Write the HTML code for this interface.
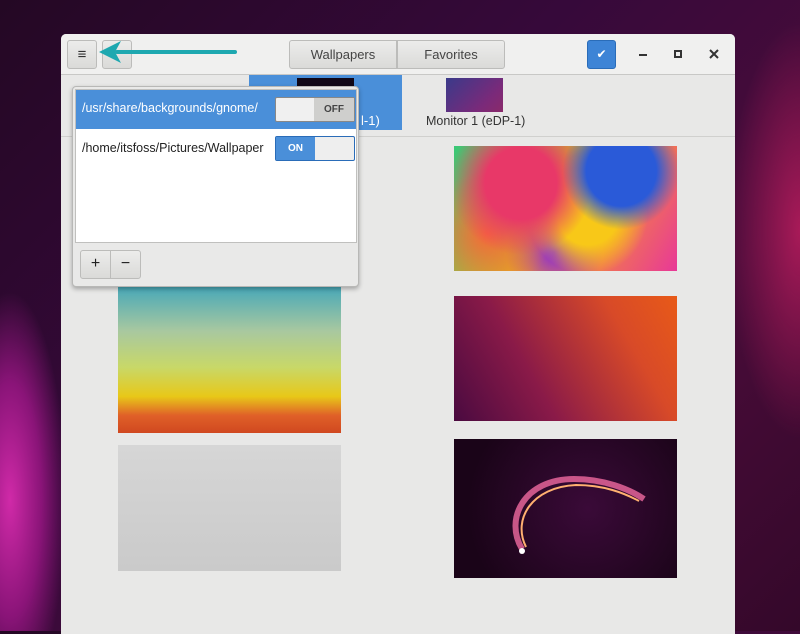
<!DOCTYPE html>
<html><head><meta charset="utf-8"><style>
*{box-sizing:border-box;margin:0;padding:0}
body{width:800px;height:631px;overflow:hidden;position:relative;font-family:"Liberation Sans",sans-serif;
background:radial-gradient(ellipse 70px 260px at 10px 500px,#d02aa8 0%,#8a1478 45%,transparent 80%),
radial-gradient(ellipse 90px 260px at 800px 230px,#a81a58 0%,transparent 80%),
linear-gradient(135deg,#240824 0%,#36093a 40%,#4a0c3a 70%,#34082a 100%);}
.a{position:absolute}
.win{left:61px;top:34px;width:674px;height:600px;background:#e8e8e7;border-radius:5px 5px 0 0}
.hdr{left:0;top:0;width:674px;height:41px;background:#f0f0ef;border-bottom:1px solid #c8c8c6;border-radius:5px 5px 0 0}
.btn{background:linear-gradient(#ececeb,#dadad8);border:1px solid #bcbcba;border-radius:3px}
.img{position:absolute}
</style></head><body>
<div class="a win">
 <div class="a hdr"></div>
 <div class="a btn" style="left:6px;top:6px;width:30px;height:29px;font-size:15px;text-align:center;line-height:27px;color:#333">≡</div>
 <div class="a btn" style="left:41px;top:6px;width:30px;height:29px"></div>
 <div class="a btn" style="left:228px;top:6px;width:108px;height:29px;font-size:13px;text-align:center;line-height:27px;color:#444;border-radius:3px 0 0 3px">Wallpapers</div>
 <div class="a btn" style="left:336px;top:6px;width:108px;height:29px;font-size:13px;text-align:center;line-height:27px;color:#444;border-radius:0 3px 3px 0">Favorites</div>
 <div class="a" style="left:526px;top:6px;width:29px;height:29px;background:#3d84d6;border:1px solid #2a6cb8;border-radius:3px;color:#fff;text-align:center;line-height:27px;font-size:12px">✔</div>
 <div class="a" style="left:578px;top:20px;width:8px;height:2px;background:#333"></div>
 <div class="a" style="left:613px;top:16px;width:8px;height:8px;border:2px solid #333"></div>
 <svg class="a" style="left:648px;top:15px" width="10" height="10"><path d="M1 1L9 9M9 1L1 9" stroke="#333" stroke-width="2"/></svg>
 <div class="a" style="left:0;top:102px;width:674px;height:1px;background:#d0d0ce"></div>
 <div class="a" style="left:188px;top:41px;width:153px;height:55px;background:#4a8fd9"></div>
 <div class="a" style="left:236px;top:44px;width:57px;height:22px;background:#100818"></div>
 <div class="a" style="left:300px;top:79px;color:#fff;font-size:13px">l-1)</div>
 <div class="a" style="left:385px;top:44px;width:57px;height:34px;background:linear-gradient(135deg,#3a3a8a,#7a2a7a 70%,#8a2a6a)"></div>
 <div class="a" style="left:365px;top:80px;color:#333;font-size:12.5px">Monitor 1 (eDP-1)</div>
</div>
<div class="img" style="left:454px;top:146px;width:223px;height:125px;background:radial-gradient(circle at 75% 20%,#2a5ad8 0 18%,transparent 30%),radial-gradient(circle at 30% 30%,#e83868 0 20%,transparent 40%),radial-gradient(circle at 60% 55%,#f8c818 0 20%,transparent 40%),radial-gradient(circle at 15% 70%,#f86838,transparent 30%),radial-gradient(circle at 45% 85%,#8a28d8,transparent 30%),linear-gradient(120deg,#38c878,#f8a818,#e83898)"></div>
<div class="img" style="left:118px;top:287px;width:223px;height:146px;background:linear-gradient(180deg,#48a8b8 0%,#a8c8a0 30%,#c8d868 55%,#e8c818 75%,#e06028 88%,#d04820 100%)"></div>
<div class="img" style="left:454px;top:296px;width:223px;height:125px;background:linear-gradient(60deg,#4a0a40 0%,#8a1a48 35%,#d84a28 75%,#e85a18 100%)"></div>
<div class="img" style="left:118px;top:445px;width:223px;height:126px;background:linear-gradient(#d6d6d6,#cacaca)"></div>
<div class="img" style="left:454px;top:439px;width:223px;height:139px;background:radial-gradient(circle at 60% 50%,#3a0a38,#1a0418 80%)">
 <svg width="223" height="139"><path d="M68 110C50 80 70 40 120 40C150 40 175 50 190 60" stroke="#f06aa0" stroke-width="6" fill="none" opacity=".8"/><path d="M72 108C58 80 78 48 122 46C150 46 170 54 185 62" stroke="#ffb070" stroke-width="2" fill="none"/><circle cx="68" cy="112" r="3" fill="#fff"/></svg>
</div>
<div class="a" style="left:72px;top:86px;width:287px;height:201px;background:#e9e9e8;border:1px solid #b8b8b6;border-radius:4px;box-shadow:0 2px 5px rgba(0,0,0,.3)">
 <div class="a" style="left:2px;top:2px;width:282px;height:154px;background:#fff;border:1px solid #c0c0be"></div>
 <div class="a" style="left:3px;top:3px;width:280px;height:39px;background:#4a8fd9"></div>
 <div class="a" style="left:9px;top:14px;color:#fff;font-size:12.5px">/usr/share/backgrounds/gnome/</div>
 <div class="a" style="left:202px;top:10px;width:80px;height:25px;border:1px solid #888;border-radius:2px;background:#f0f0f0"><div class="a" style="right:0;top:0;width:40px;height:23px;background:#cfcfcd;font-size:10px;font-weight:bold;color:#444;text-align:center;line-height:23px">OFF</div></div>
 <div class="a" style="left:9px;top:54px;color:#222;font-size:12.5px">/home/itsfoss/Pictures/Wallpaper</div>
 <div class="a" style="left:202px;top:49px;width:80px;height:25px;border:1px solid #2a6cb8;border-radius:2px;background:#eee"><div class="a" style="left:0;top:0;width:39px;height:23px;background:#4a8fd9;font-size:10px;font-weight:bold;color:#fff;text-align:center;line-height:23px">ON</div></div>
 <div class="a btn" style="left:7px;top:163px;width:31px;height:29px;text-align:center;line-height:26px;font-size:16px;color:#222;border-radius:3px 0 0 3px">+</div>
 <div class="a btn" style="left:37px;top:163px;width:31px;height:29px;text-align:center;line-height:26px;font-size:16px;color:#222;border-radius:0 3px 3px 0">−</div>
</div>
<svg class="a" style="left:95px;top:40px" width="145" height="26"><path d="M140 12H22" stroke="#1ea8b0" stroke-width="4" stroke-linecap="round"/><path d="M4 12L26 1L20 12L26 23Z" fill="#1ea8b0"/></svg>
</body></html>
